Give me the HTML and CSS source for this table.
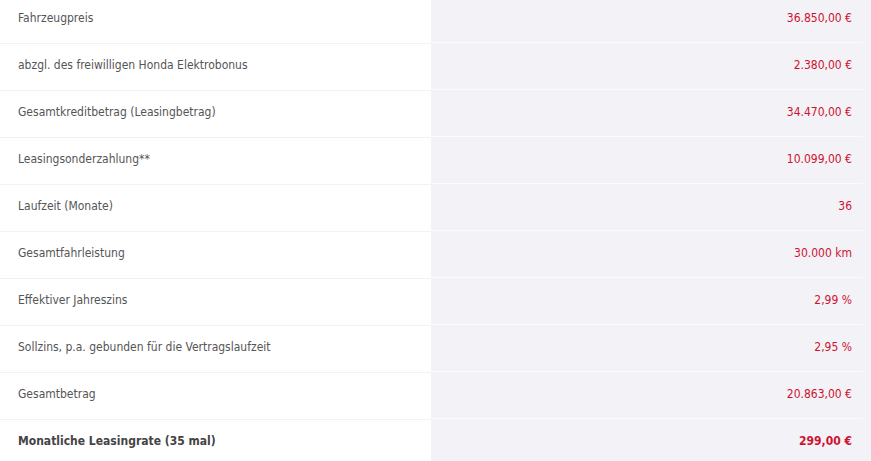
FILE: index.html
```html
<!DOCTYPE html>
<html>

<head>
    <meta charset="UTF-8" />
    <title>Leasing Details</title>
    <link rel="stylesheet" href="styles.css">
</head>

<body>
    <table class="details">
        <tr>
            <td class="label">Fahrzeugpreis</td>
            <td class="value">36.850,00 €</td>
        </tr>
        <tr>
            <td class="label">abzgl. des freiwilligen Honda Elektrobonus</td>
            <td class="value">2.380,00 €</td>
        </tr>
        <tr>
            <td class="label">Gesamtkreditbetrag (Leasingbetrag)</td>
            <td class="value">34.470,00 €</td>
        </tr>
        <tr>
            <td class="label">Leasingsonderzahlung**</td>
            <td class="value">10.099,00 €</td>
        </tr>
        <tr>
            <td class="label">Laufzeit (Monate)</td>
            <td class="value">36</td>
        </tr>
        <tr>
            <td class="label">Gesamtfahrleistung</td>
            <td class="value">30.000 km</td>
        </tr>
        <tr>
            <td class="label">Effektiver Jahreszins</td>
            <td class="value">2,99 %</td>
        </tr>
        <tr>
            <td class="label">Sollzins, p.a. gebunden für die Vertragslaufzeit</td>
            <td class="value">2,95 %</td>
        </tr>
        <tr>
            <td class="label">Gesamtbetrag</td>
            <td class="value">20.863,00 €</td>
        </tr>
        <tr class="total">
            <td class="label">Monatliche Leasingrate (35 mal)</td>
            <td class="value">299,00 €</td>
        </tr>
    </table>
</body>

</html>
```

FILE: styles.css
```css
body {
    font-family: "DejaVu Sans Condensed", Tahoma, sans-serif;
    font-size: 12px;
    margin: 0;
    padding: 0;
    background-color: #fff;
}

.details {
    width: 100%;
    border-collapse: collapse;
    margin-top: -3px;
}

.details td {
    height: 42px;
    padding: 0 0 4px 0;
    vertical-align: middle;
}

.label {
    width: 413px;
    padding-left: 18px !important;
    color: #555;
    border-bottom: 1px solid #f2f2f2;
}

.value {
    text-align: right;
    padding-right: 19px !important;
    color: #cf1230;
    border-bottom: 1px solid transparent;
    background: linear-gradient(#fbfbfd, #fbfbfd) left bottom / calc(100% - 8px) 1px no-repeat,
        #f3f2f7;
}

.total td {
    font-weight: bold;
    border-bottom: none;
}

.total .label {
    color: #444;
}
```
